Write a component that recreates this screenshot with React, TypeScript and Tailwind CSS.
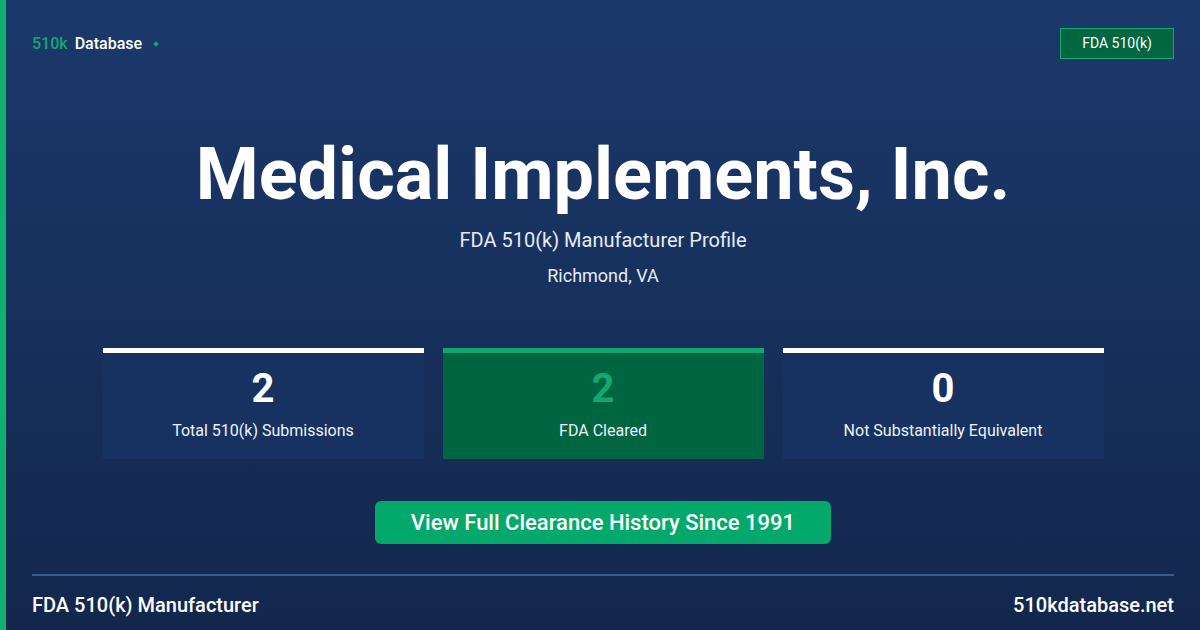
export default function App() {
  const f = { fontFamily: "Roboto, 'Noto Sans', sans-serif" };
  return (
    <div style={f} className="w-[1200px] h-[630px] flex bg-gradient-to-b from-[#1b396b] to-[#13274d] text-white overflow-hidden">
      <div className="w-[6px] bg-[#10b06e] shrink-0" />
      <div className="flex-1 flex flex-col px-[26px]">
        <div className="flex justify-between items-center pt-[28px] h-[59px]">
          <div className="flex items-center text-[16px] font-medium">
            <span className="text-[#10a870]">510k</span>
            <span className="ml-[7px]">Database</span>
            <span className="ml-[12px] w-[4px] h-[4px] bg-[#10a870] rotate-45" />
          </div>
          <div className="border border-[#10a870] bg-[#02663f] text-[14px] px-[21px] h-[31px] flex items-center">FDA 510(k)</div>
        </div>
        <div className="text-center font-bold text-[72px] leading-none mt-[80px]">Medical Implements, Inc.</div>
        <div className="text-center text-[20px] mt-[14px] text-[#e6ecf5]">FDA 510(k) Manufacturer Profile</div>
        <div className="text-center text-[18px] mt-[7px] text-[#e6ecf5]">Richmond, VA</div>
        <div className="flex justify-center gap-[19px] mt-[59px]">
          {[
            ["2", "Total 510(k) Submissions", false],
            ["2", "FDA Cleared", true],
            ["0", "Not Substantially Equivalent", false],
          ].map(([n, l, g], i) => (
            <div key={i} className={`w-[321px] h-[111px] flex flex-col items-center border-t-[5px] ${g ? "bg-[#006641] border-[#0fa86c]" : "bg-[#173260] border-white"}`}>
              <div className={`text-[40px] font-bold leading-none mt-[16px] ${g ? "text-[#12a870]" : ""}`}>{n}</div>
              <div className="text-[16px] mt-[10px] text-[#eef2f8]">{l}</div>
            </div>
          ))}
        </div>
        <div className="flex justify-center mt-[42px]">
          <div className="w-[456px] h-[43px] rounded-[6px] bg-[#03a86b] flex items-center justify-center text-[22px] font-medium">View Full Clearance History Since 1991</div>
        </div>
        <div className="h-[2px] bg-[#3b5a8a] mt-[30px]" />
        <div className="flex justify-between items-center mt-[14px] text-[20px] font-medium">
          <span>FDA 510(k) Manufacturer</span>
          <span>510kdatabase.net</span>
        </div>
      </div>
    </div>
  );
}
